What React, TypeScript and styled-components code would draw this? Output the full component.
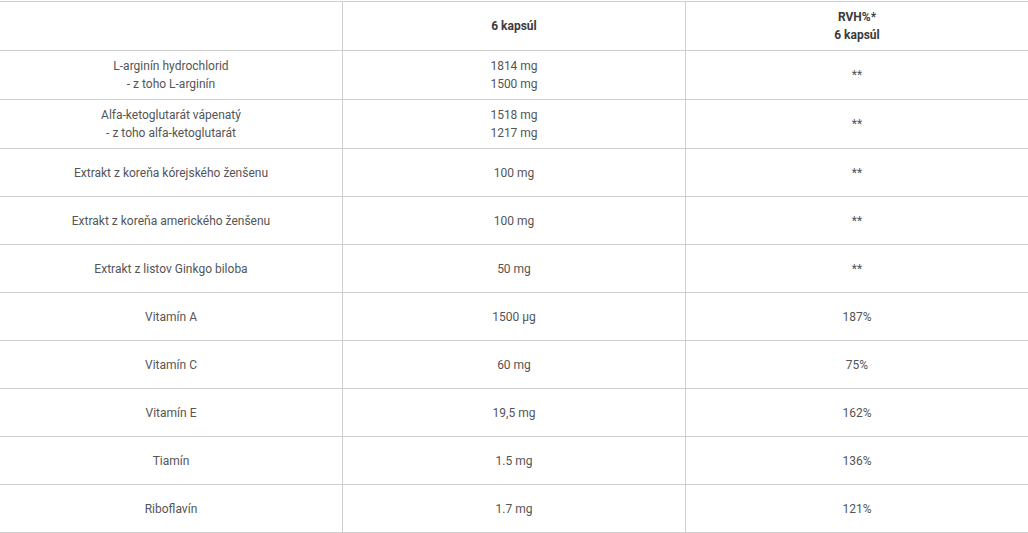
import React from 'react';
import styled, { createGlobalStyle } from 'styled-components';

const GlobalStyle = createGlobalStyle`
  html, body {
    margin: 0;
    padding: 0;
    background: #ffffff;
  }
  body {
    font-family: Roboto, "Liberation Sans", Arial, sans-serif;
  }
`;

const Table = styled.div`
  width: 1028px;
  padding-top: 1px;
  border-collapse: collapse;
`;

const Row = styled.div<{ $head?: boolean; $tall?: boolean }>`
  display: grid;
  grid-template-columns: 343px 343px 1fr;
  border-top: ${(p) => (p.$head ? '1px solid #cfcfcf' : 'none')};
  border-bottom: 1px solid #cfcfcf;
  min-height: ${(p) => (p.$head || p.$tall ? '48px' : '47px')};
`;

const Cell = styled.div<{ $head?: boolean; $last?: boolean }>`
  box-sizing: border-box;
  display: flex;
  flex-direction: column;
  align-items: center;
  justify-content: center;
  text-align: center;
  padding: 6px 8px;
  border-right: ${(p) => (p.$last ? 'none' : '1px solid #cfcfcf')};
  font-size: 12px;
  line-height: 18px;
  font-weight: ${(p) => (p.$head ? 700 : 400)};
  color: ${(p) => (p.$head ? '#3b3b3b' : '#555555')};
`;

type Item = { name: string[]; amount: string[]; rvh: string };

const rows: Item[] = [
  { name: ['L-arginín hydrochlorid', '- z toho L-arginín'], amount: ['1814 mg', '1500 mg'], rvh: '**' },
  { name: ['Alfa-ketoglutarát vápenatý', '- z toho alfa-ketoglutarát'], amount: ['1518 mg', '1217 mg'], rvh: '**' },
  { name: ['Extrakt z koreňa kórejského ženšenu'], amount: ['100 mg'], rvh: '**' },
  { name: ['Extrakt z koreňa amerického ženšenu'], amount: ['100 mg'], rvh: '**' },
  { name: ['Extrakt z listov Ginkgo biloba'], amount: ['50 mg'], rvh: '**' },
  { name: ['Vitamín A'], amount: ['1500 µg'], rvh: '187%' },
  { name: ['Vitamín C'], amount: ['60 mg'], rvh: '75%' },
  { name: ['Vitamín E'], amount: ['19,5 mg'], rvh: '162%' },
  { name: ['Tiamín'], amount: ['1.5 mg'], rvh: '136%' },
  { name: ['Riboflavín'], amount: ['1.7 mg'], rvh: '121%' },
];

const Lines = ({ items }: { items: string[] }) => (
  <>
    {items.map((t) => (
      <span key={t}>{t}</span>
    ))}
  </>
);

export default function App() {
  return (
    <>
      <GlobalStyle />
      <Table>
        <Row $head>
          <Cell $head />
          <Cell $head>6 kapsúl</Cell>
          <Cell $head $last>
            <span>RVH%*</span>
            <span>6 kapsúl</span>
          </Cell>
        </Row>
        {rows.map((r) => (
          <Row key={r.name[0]} $tall={r.name.length > 1}>
            <Cell>
              <Lines items={r.name} />
            </Cell>
            <Cell>
              <Lines items={r.amount} />
            </Cell>
            <Cell $last>{r.rvh}</Cell>
          </Row>
        ))}
      </Table>
    </>
  );
}
